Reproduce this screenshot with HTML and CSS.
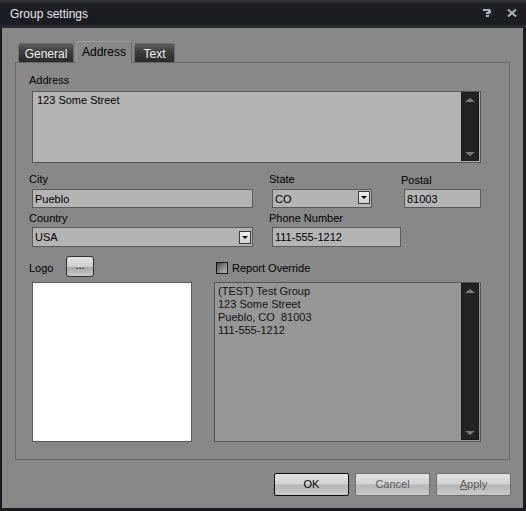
FILE: index.html
```html
<!DOCTYPE html>
<html>
<head>
    <meta charset="utf-8" />
    <title>Group settings</title>
    <meta name="viewport" content="width=device-width, initial-scale=1">
    <link rel="stylesheet" href="styles.css">
</head>
<body>
<div class="window">
    <div class="titlebar">
        <span class="title">Group settings</span>
        <div class="caption">
            <svg class="cap-help" width="8" height="8" viewBox="0 0 8 8">
                <rect x="0" y="0" width="7" height="2"/>
                <rect x="5" y="1" width="3" height="3"/>
                <rect x="3" y="3" width="4" height="2"/>
                <rect x="3" y="6" width="3" height="2"/>
            </svg>
            <svg class="cap-close" width="10" height="8" viewBox="0 0 10 8">
                <path d="M1 0.5 L9 7.5 M9 0.5 L1 7.5"/>
            </svg>
        </div>
    </div>
    <div class="client">
        <div class="tabs">
            <div class="tab">General</div>
            <div class="tab active">Address</div>
            <div class="tab">Text</div>
        </div>
        <div class="panel">
            <div class="lbl">Address</div>
            <div class="memo address-memo">
                <div class="memo-text">123 Some Street</div>
                <div class="vscroll"><span class="up"></span><span class="down"></span></div>
            </div>

            <div class="fields">
                <div class="field">
                    <div class="lbl">City</div>
                    <div class="edit w-city">Pueblo</div>
                </div>
                <div class="field">
                    <div class="lbl">State</div>
                    <div class="edit combo w-state">CO<span class="drop"></span></div>
                </div>
                <div class="field">
                    <div class="lbl lbl-low">Postal</div>
                    <div class="edit w-postal">81003</div>
                </div>
                <div class="field row2">
                    <div class="lbl">Country</div>
                    <div class="edit combo w-country">USA<span class="drop"></span></div>
                </div>
                <div class="field row2">
                    <div class="lbl">Phone Number</div>
                    <div class="edit w-phone">111-555-1212</div>
                </div>
            </div>

            <div class="logo-row">
                <div class="logo-head">
                    <span class="lbl">Logo</span>
                    <div class="dots">...</div>
                </div>
                <div class="override">
                    <span class="check"></span>
                    <span>Report Override</span>
                </div>
            </div>

            <div class="boxes">
                <div class="logo-box"></div>
                <div class="memo report-memo">
                    <div class="memo-text">(TEST) Test Group<br>123 Some Street<br>Pueblo, CO&nbsp; 81003<br>111-555-1212</div>
                    <div class="vscroll"><span class="up"></span><span class="down"></span></div>
                </div>
            </div>
        </div>
        <div class="buttons">
            <div class="btn default">OK</div>
            <div class="btn off">Cancel</div>
            <div class="btn off"><u>A</u>pply</div>
        </div>
    </div>
</div>
</body>
</html>
```

FILE: styles.css
```css
* {
    margin: 0;
    padding: 0;
    box-sizing: border-box;
}
body {
    background: #1b1c20;
    font-family: "Liberation Sans", Arial, sans-serif;
    font-size: 11px;
    color: #000;
}
.window {
    width: 526px;
    height: 511px;
    display: flex;
    flex-direction: column;
    background: #1b1c20;
}
.titlebar {
    height: 28px;
    display: flex;
    align-items: center;
    padding: 0 10px 1px 10px;
    background: linear-gradient(#3a3c43 0, #2a2b31 2px, #1d1e23 4px, #1b1c21 24px, #2c2e34 27px, #1b1c20 28px);
    color: #e8eaee;
    font-size: 12px;
}
.title {
    flex: 1;
}
.caption {
    display: flex;
    align-items: center;
    gap: 16px;
    margin-right: -1px;
    padding-bottom: 1px;
}
.cap-help {
    fill: #aab4be;
}
.cap-close {
    stroke: #aab4be;
    stroke-width: 2;
    fill: none;
}
.client {
    flex: 1;
    margin: 0 3px 3px 2px;
    background: #888888;
    padding: 13px 13px 0 13px;
    display: flex;
    flex-direction: column;
}
.tabs {
    display: flex;
    align-items: flex-end;
    gap: 2px;
    height: 21px;
    padding-left: 3px;
}
.tab {
    height: 19px;
    padding-top: 3px;
    text-align: center;
    color: #f2f2f2;
    font-size: 12px;
    border: 1px solid #6c6c6c;
    border-bottom: none;
    border-radius: 3px 3px 0 0;
    background: linear-gradient(#5c5c5c, #3c3c3c 45%, #2a2a2a);
    width: 56px;
}
.tab:last-child {
    width: 41px;
}
.tab.active {
    height: 22px;
    margin-bottom: -1px;
    padding-top: 3px;
    position: relative;
    z-index: 1;
    color: #000;
    background: #888888;
    border-color: #a0a0a0 #666 #888 #9a9a9a;
}
.panel {
    height: 398px;
    border: 1px solid #666;
    padding: 10px 13px 0 13px;
}
.lbl {
    display: block;
    line-height: 14px;
    height: 14px;
}
.lbl-low {
    margin-top: 1px;
    margin-bottom: -1px;
}
.memo {
    display: flex;
    border: 1px solid #555;
    background: #b4b4b4;
}
.memo-text {
    flex: 1;
    padding: 2px 4px;
    line-height: 13px;
}
.address-memo {
    margin: 4px 0 0 3px;
    width: 449px;
    height: 72px;
}
.vscroll {
    width: 18px;
    margin: 0 1px 1px 0;
    background: #222;
    border: 1px solid #1a1a1a;
    display: flex;
    flex-direction: column;
    justify-content: space-between;
    align-items: center;
    padding: 5px 0 4px 0;
}
.up, .down {
    width: 0;
    height: 0;
    border-left: 5px solid transparent;
    border-right: 5px solid transparent;
}
.up {
    border-bottom: 4px solid #7a7a7a;
}
.down {
    border-top: 4px solid #7a7a7a;
}
.fields {
    margin-top: 9px;
    display: grid;
    grid-template-columns: 240px 132px 1fr;
    row-gap: 3px;
}
.edit {
    margin: 3px 0 0 3px;
    height: 19px;
    border: 1px solid #5a5a5a;
    background: #b4b4b4;
    padding: 2px 0 0 2px;
    line-height: 14px;
    display: flex;
    align-items: flex-start;
}
.row2 .edit {
    margin-top: 2px;
    height: 20px;
}
.combo {
    justify-content: space-between;
}
.drop {
    width: 12px;
    height: 13px;
    margin: -1px 1px 0 0;
    border: 1px solid #3a3a3a;
    background: linear-gradient(#f0f0f0, #cfcfcf);
    display: flex;
    align-items: center;
    justify-content: center;
}
.row2 .drop {
    margin-top: 1px;
}
.drop::after {
    content: "";
    border-left: 3px solid transparent;
    border-right: 3px solid transparent;
    border-top: 3px solid #000;
}
.w-city, .w-country {
    width: 221px;
}
.w-state {
    width: 100px;
}
.w-postal {
    width: 77px;
}
.w-phone {
    width: 129px;
}
.logo-row {
    margin-top: 9px;
    height: 21px;
    display: grid;
    grid-template-columns: 185px 1fr;
}
.logo-head {
    display: flex;
    align-items: center;
    padding-top: 2px;
}
.logo-head .lbl {
    width: 37px;
}
.dots {
    width: 28px;
    height: 21px;
    margin-top: -2px;
    border: 1px solid #2e2e2e;
    border-radius: 3px;
    background: linear-gradient(#e6e6e6, #cdcdcd 50%, #a9a9a9 52%, #c4c4c4);
    text-align: center;
    line-height: 16px;
}
.override {
    display: flex;
    align-items: center;
    padding: 3px 0 0 2px;
    gap: 4px;
}
.check {
    width: 12px;
    height: 12px;
    border: 1px solid #151515;
    background: linear-gradient(135deg, #4a4a4a, #bdbdbd);
}
.boxes {
    margin-top: 5px;
    display: grid;
    grid-template-columns: 185px 1fr;
}
.logo-box {
    margin-left: 3px;
    width: 160px;
    height: 160px;
    background: #fff;
    border: 1px solid #5a5a5a;
}
.report-memo {
    width: 267px;
    height: 160px;
    background: #979797;
}
.report-memo .memo-text {
    padding: 2px 3px;
    color: #111;
}
.buttons {
    margin: 13px -1px 0 0;
    display: flex;
    justify-content: flex-end;
    gap: 6px;
}
.btn {
    width: 75px;
    height: 23px;
    border: 1px solid #707070;
    border-radius: 2px;
    text-align: center;
    line-height: 21px;
    background: linear-gradient(#e2e2e2, #d2d2d2 48%, #b6b6b6 52%, #cacaca);
}
.btn.default {
    border-color: #0e0e0e;
}
.btn.off {
    color: #5a5a5a;
}
```
